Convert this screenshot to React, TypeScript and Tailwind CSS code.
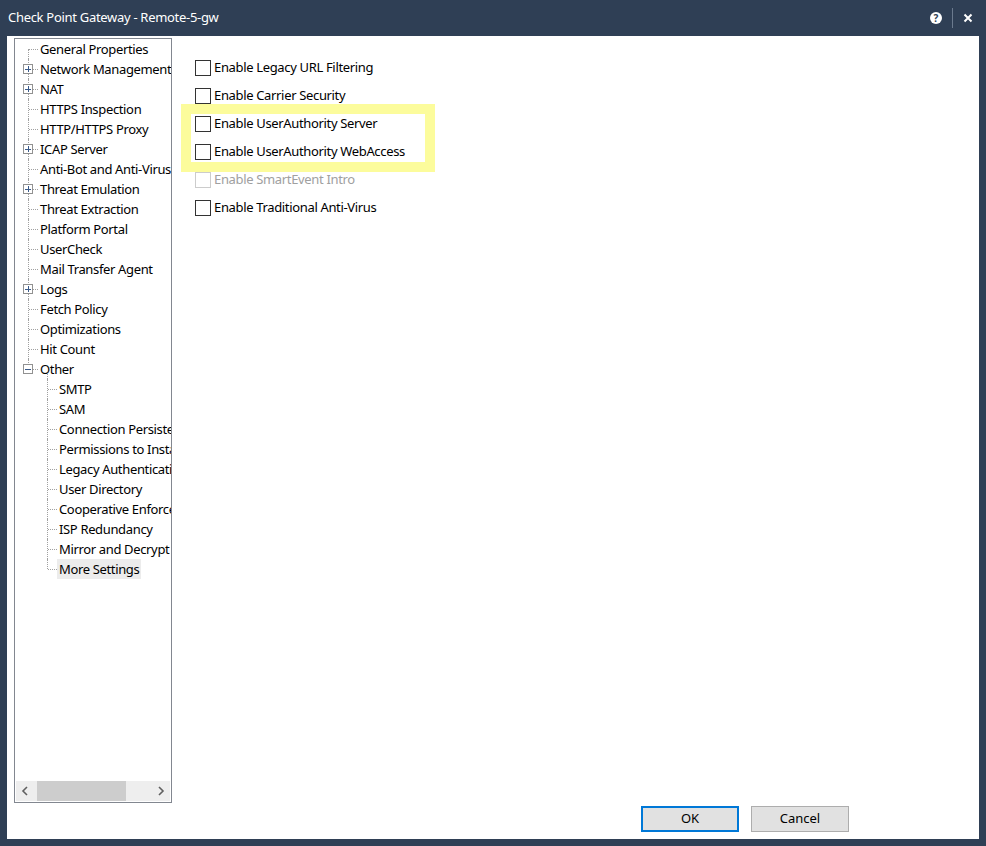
import React from 'react';

type Node = { label: string; exp?: '+' | '-'; child?: boolean; selected?: boolean };

const tree: Node[] = [
  { label: 'General Properties' },
  { label: 'Network Management', exp: '+' },
  { label: 'NAT', exp: '+' },
  { label: 'HTTPS Inspection' },
  { label: 'HTTP/HTTPS Proxy' },
  { label: 'ICAP Server', exp: '+' },
  { label: 'Anti-Bot and Anti-Virus' },
  { label: 'Threat Emulation', exp: '+' },
  { label: 'Threat Extraction' },
  { label: 'Platform Portal' },
  { label: 'UserCheck' },
  { label: 'Mail Transfer Agent' },
  { label: 'Logs', exp: '+' },
  { label: 'Fetch Policy' },
  { label: 'Optimizations' },
  { label: 'Hit Count' },
  { label: 'Other', exp: '-' },
  { label: 'SMTP', child: true },
  { label: 'SAM', child: true },
  { label: 'Connection Persistence', child: true },
  { label: 'Permissions to Install', child: true },
  { label: 'Legacy Authentication', child: true },
  { label: 'User Directory', child: true },
  { label: 'Cooperative Enforcement', child: true },
  { label: 'ISP Redundancy', child: true },
  { label: 'Mirror and Decrypt', child: true },
  { label: 'More Settings', child: true, selected: true },
];

const options = [
  { label: 'Enable Legacy URL Filtering' },
  { label: 'Enable Carrier Security' },
  { label: 'Enable UserAuthority Server' },
  { label: 'Enable UserAuthority WebAccess' },
  { label: 'Enable SmartEvent Intro', disabled: true },
  { label: 'Enable Traditional Anti-Virus' },
];

const dotV = 'border-l border-dotted border-[#a0a0a0]';
const dotH = 'border-t border-dotted border-[#a0a0a0]';

function TreeRow({ node, index }: { node: Node; index: number }) {
  const first = index === 0;
  const lastTop = node.label === 'Other';
  const lastChild = node.label === 'More Settings';
  return (
    <div className="relative flex h-5 items-center whitespace-nowrap">
      {/* top-level guide */}
      {!node.child && (
        <div
          className={`absolute left-[13px] w-0 ${dotV} ${first ? 'top-[10px] h-[10px]' : lastTop ? 'top-0 h-[10px]' : 'top-0 h-5'}`}
        />
      )}
      {node.child && (
        <>
          <div className={`absolute left-[32px] w-0 ${dotV} ${lastChild ? 'top-0 h-[10px]' : 'top-0 h-5'}`} />
          <div className={`absolute left-[33px] top-[10px] w-[9px] ${dotH}`} />
        </>
      )}
      {!node.child && <div className={`absolute left-[14px] top-[10px] w-[9px] ${dotH}`} />}
      {lastTop && <div className={`absolute left-[32px] top-[15px] h-[5px] w-0 ${dotV}`} />}
      {node.exp && (
        <div className="absolute left-[8px] top-[5px] flex h-[10px] w-[10px] items-center justify-center border border-[#919191] bg-white">
          <div className="absolute h-px w-[6px] bg-[#3a5a8a]" />
          {node.exp === '+' && <div className="absolute h-[6px] w-px bg-[#3a5a8a]" />}
        </div>
      )}
      <span
        className={`${node.child ? 'ml-[42px]' : 'ml-[23px]'} px-[2px] leading-5 text-[13px] tracking-[-0.35px] text-black ${node.selected ? 'bg-[#ececec]' : ''}`}
      >
        {node.label}
      </span>
    </div>
  );
}

function Checkbox({ label, disabled }: { label: string; disabled?: boolean }) {
  return (
    <div className="flex h-7 items-center gap-[3px]">
      <div className={`h-4 w-4 border bg-white ${disabled ? 'border-[#cccccc]' : 'border-[#333333]'}`} />
      <span className={`text-[13px] tracking-[-0.34px] ${disabled ? 'text-[#a0a0a0]' : 'text-black'}`}>{label}</span>
    </div>
  );
}

export default function App() {
  return (
    <div
      className="flex h-[846px] w-[986px] flex-col bg-[#2f3f55]"
      style={{ fontFamily: '"Noto Sans", "Open Sans", Arial, sans-serif' }}
    >
      {/* Title bar */}
      <div className="flex h-9 shrink-0 items-center pl-2 pr-[13px] text-white">
        <span className="text-[13px] tracking-[-0.3px]">Check Point Gateway - Remote-5-gw</span>
        <div className="ml-auto flex items-center">
          <div className="flex h-[12px] w-[12px] items-center justify-center rounded-full bg-white text-[10px] font-bold leading-none text-[#2f3f55]">
            ?
          </div>
          <div className="mx-[10px] h-[20px] w-px bg-[#6b7a8e]" />
          <svg width="10" height="10" viewBox="0 0 10 10">
            <path d="M1.5 1.5 L8.5 8.5 M8.5 1.5 L1.5 8.5" stroke="white" strokeWidth="2" />
          </svg>
        </div>
      </div>

      {/* Body */}
      <div className="mx-[7px] mb-2 flex flex-1 flex-col bg-white">
        <div className="flex flex-1">
          {/* Tree */}
          <div className="ml-[7px] mt-[2px] flex h-[765px] w-[158px] flex-col border border-[#828790]">
            <div className="flex-1 overflow-hidden">
              {tree.map((n, i) => (
                <TreeRow key={n.label} node={n} index={i} />
              ))}
            </div>
            <div className="mx-px mb-px flex h-5 items-center bg-[#eeeeee]">
              <svg className="ml-[5px]" width="8" height="10" viewBox="0 0 8 10">
                <path d="M6 1 L2 5 L6 9" stroke="#606060" strokeWidth="1.6" fill="none" />
              </svg>
              <div className="ml-[8px] h-5 w-[89px] bg-[#cdcdcd]" />
              <svg className="ml-auto mr-[5px]" width="8" height="10" viewBox="0 0 8 10">
                <path d="M2 1 L6 5 L2 9" stroke="#606060" strokeWidth="1.6" fill="none" />
              </svg>
            </div>
          </div>

          {/* Options */}
          <div className="relative ml-[23px] mt-[18px] flex flex-col self-start">
            {options.map((o) => (
              <Checkbox key={o.label} label={o.label} disabled={o.disabled} />
            ))}
            {/* highlight overlay */}
            <div className="pointer-events-none absolute left-[-14px] top-[50px] h-[68px] w-[254px] border-[10px] border-[#fcfc9c]" />
          </div>
        </div>

        {/* Buttons */}
        <div className="mb-[7px] mr-[130px] mt-[3px] flex justify-end gap-3">
          <button className="h-[26px] w-[98px] border-2 border-[#0078d7] bg-[#e1e1e1] text-[13px] text-black">OK</button>
          <button className="h-[26px] w-[98px] border border-[#adadad] bg-[#e1e1e1] text-[13px] text-black">Cancel</button>
        </div>
      </div>
    </div>
  );
}
